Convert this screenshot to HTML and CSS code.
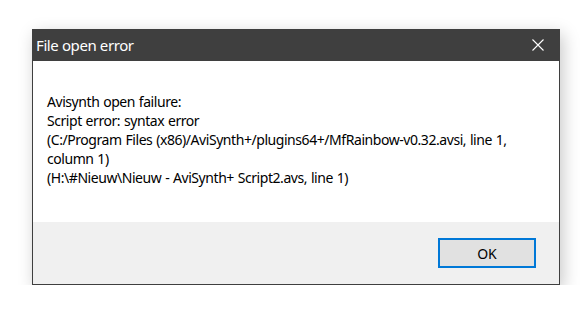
FILE: index.html
```html
<!DOCTYPE html>
<html>
<head>
<meta charset="utf-8">
<link rel="stylesheet" href="styles.css">
</head>
<body>
<div class="dialog">
  <div class="titlebar">
    <span class="title">File open error</span>
    <svg class="close" width="12" height="12" viewBox="0 0 12 12"><path d="M0.5 0.5 L11.5 11.5 M11.5 0.5 L0.5 11.5" stroke="#ffffff" stroke-width="1.1" fill="none"/></svg>
  </div>
  <div class="content">
    <p class="msg">Avisynth open failure:<br>Script error: syntax error<br>(C:/Program Files (x86)/AviSynth+/plugins64+/MfRainbow-v0.32.avsi, line 1,<br>column 1)<br>(H:\#Nieuw\Nieuw - AviSynth+ Script2.avs, line 1)</p>
  </div>
  <div class="footer">
    <button class="ok">OK</button>
  </div>
</div>
</body>
</html>
```
FILE: styles.css
```css
html, body { margin: 0; padding: 0; background: #ffffff; }
body { padding: 29px 0 0 32px; font-family: "Noto Sans", "Open Sans", sans-serif; }
.dialog {
  width: 528px;
  height: 256px;
  box-sizing: border-box;
  border: 1px solid #3f3f3f;
  border-top: none;
  display: flex;
  flex-direction: column;
  background: #ffffff;
  box-shadow: 3px 5px 16px rgba(0,0,0,0.22);
}
.titlebar {
  height: 32px;
  background: #3f3f3f;
  margin: 0 -1px;
  display: flex;
  align-items: center;
  justify-content: space-between;
  padding: 0 16px 0 4px;
  color: #ffffff;
}
.title { font-size: 15px; letter-spacing: -0.4px; }
.close { display: block; }
.content { flex: 1; padding: 31px 14px 0 14px; }
.msg { margin: 0; font-size: 14px; line-height: 19px; letter-spacing: -0.44px; word-spacing: 0.6px; color: #000000; }
.footer {
  height: 62px;
  background: #f0f0f0;
  display: flex;
  justify-content: flex-end;
  align-items: flex-start;
  padding: 16px 23px 0 0;
  box-sizing: border-box;
}
.ok {
  width: 98px;
  height: 30px;
  box-sizing: border-box;
  border: 2px solid #0078d7;
  background: #e1e1e1;
  font-family: "Noto Sans", "Open Sans", sans-serif;
  font-size: 14px;
  color: #000000;
  padding: 0;
}
```
